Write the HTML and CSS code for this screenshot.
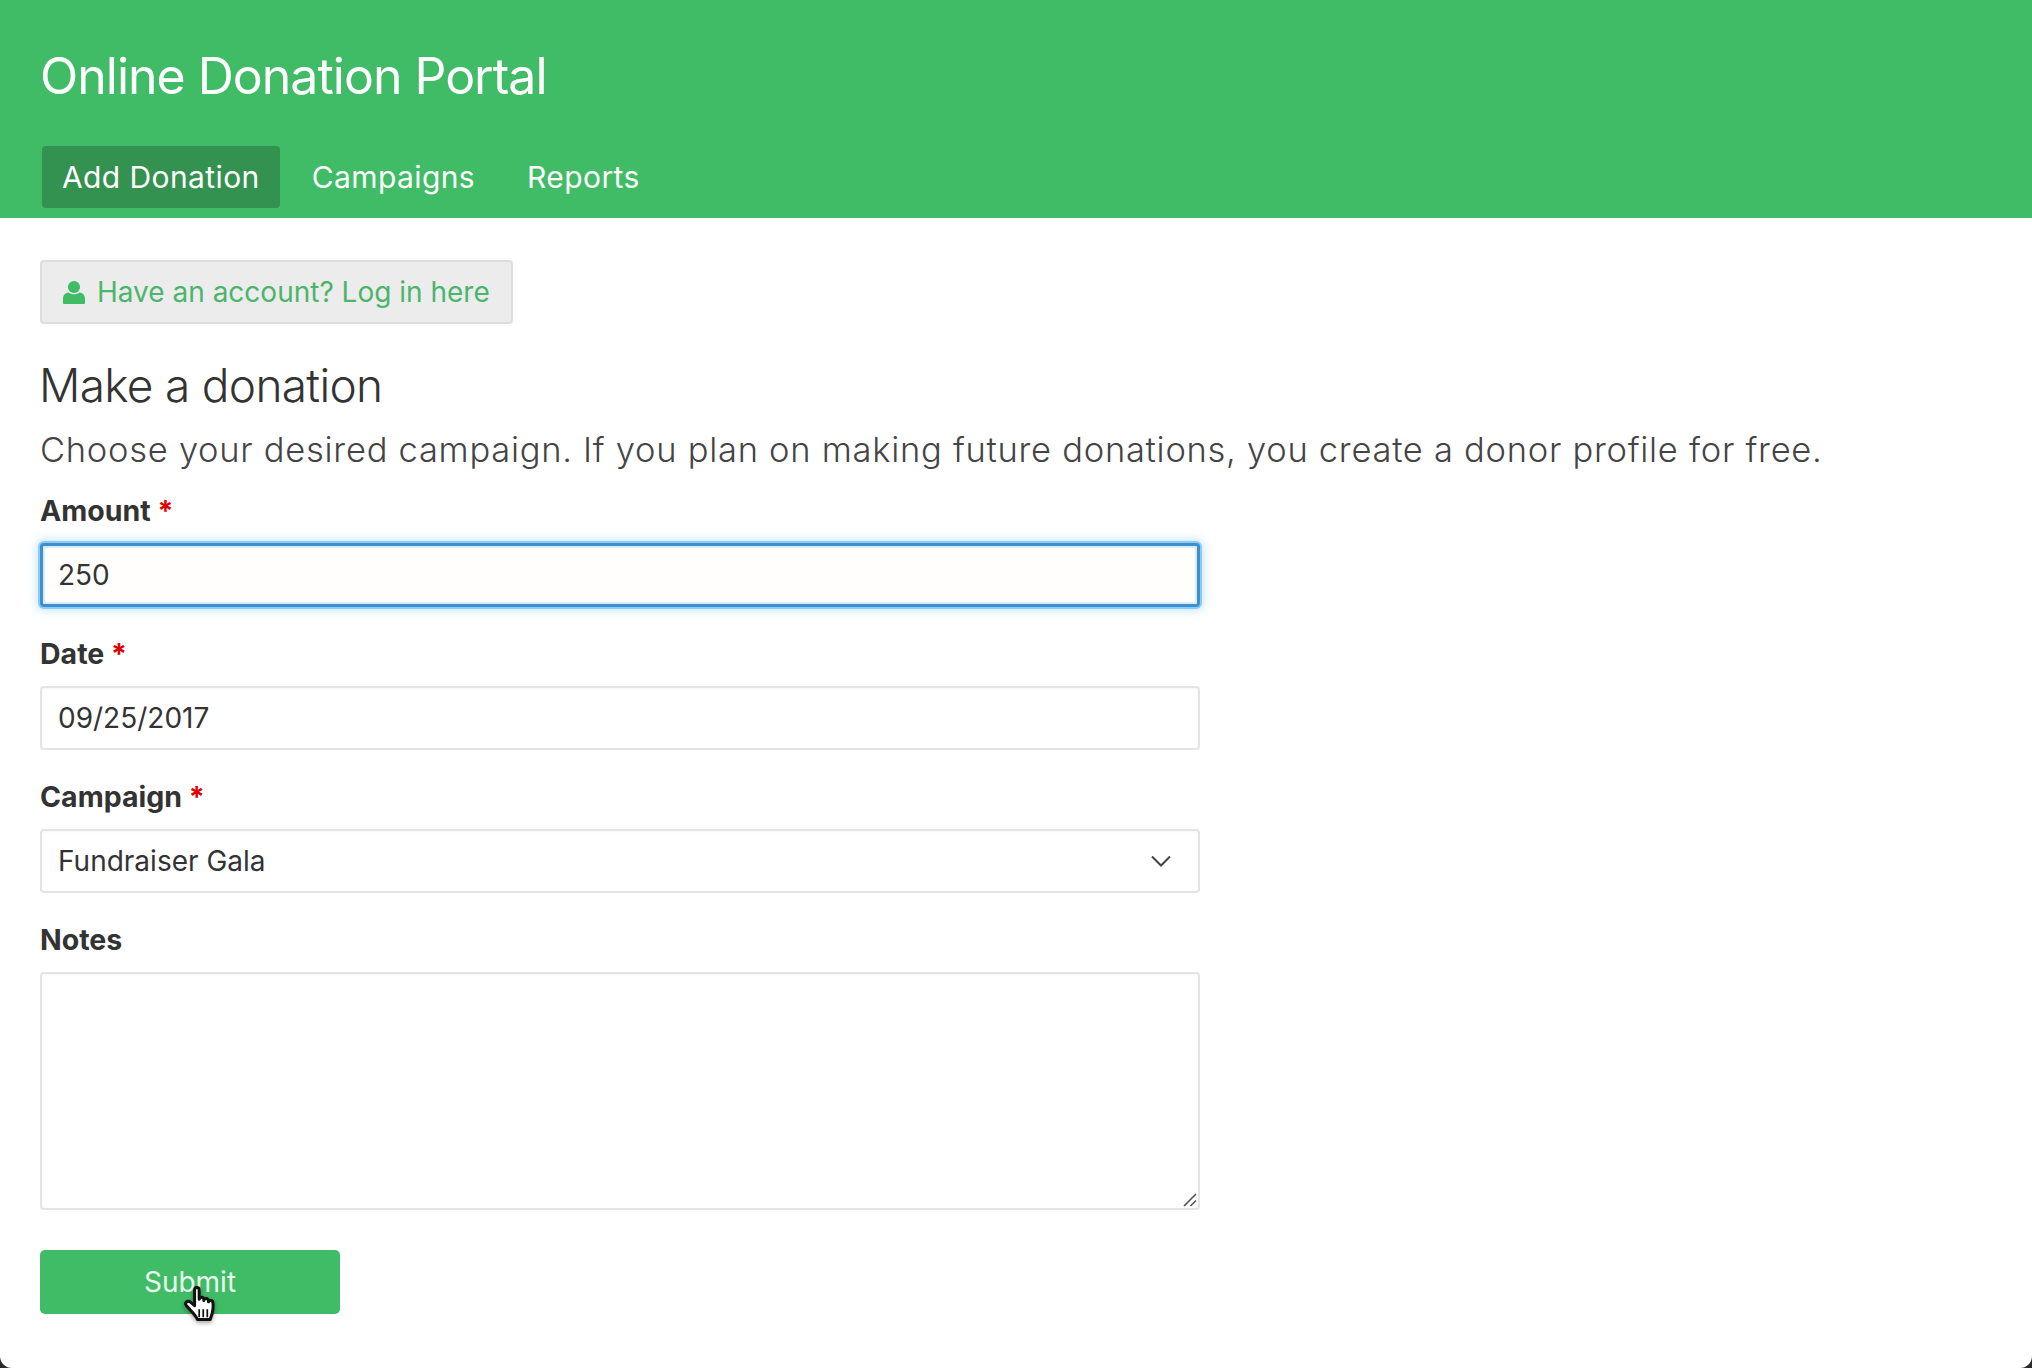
FILE: index.html
```html
<!DOCTYPE html>
<html lang="en">
<head>
  <meta charset="UTF-8" />
  <meta name="viewport" content="width=device-width, initial-scale=1.0" />
  <title>Online Donation Portal</title>
  <link rel="stylesheet" href="styles.css">
</head>
<body>
  <div class="page">
    <header class="site-header">
      <h1>Online Donation Portal</h1>
      <nav class="main-nav">
        <a href="#" class="active">Add Donation</a>
        <a href="#">Campaigns</a>
        <a href="#">Reports</a>
      </nav>
    </header>

    <main class="content">
      <a href="#" class="login-btn">
        <svg class="user-icon" viewBox="0 0 24 26" aria-hidden="true">
          <circle cx="12" cy="7" r="6.6" />
          <path d="M1 25.500c-.6 0-1-.4-1-1v-5c0-3.600 2.600-6.200 6-6.500 1.600 1.300 3.600 2 6 2s4.400-.7 6-2c3.400.3 6 2.900 6 6.500v5c0 .6-.4 1-1 1z" />
        </svg>
        Have an account? Log in here
      </a>

      <h2>Make a donation</h2>
      <p class="lead">Choose your desired campaign. If you plan on making future donations, you create a donor profile for free.</p>

      <form class="donation-form">
        <div class="field">
          <label for="amount">Amount <span class="req">*</span></label>
          <input id="amount" class="control focused" type="text" value="250">
        </div>
        <div class="field">
          <label for="date">Date <span class="req">*</span></label>
          <input id="date" class="control" type="text" value="09/25/2017">
        </div>
        <div class="field">
          <label for="campaign">Campaign <span class="req">*</span></label>
          <div class="select-wrap">
            <select id="campaign" class="control">
              <option>Fundraiser Gala</option>
            </select>
            <svg class="chevron" viewBox="0 0 20 12" aria-hidden="true">
              <path d="M1 1.500l9 9 9-9" />
            </svg>
          </div>
        </div>
        <div class="field field-notes">
          <label for="notes">Notes</label>
          <div class="notes-wrap">
            <textarea id="notes" class="control"></textarea>
            <svg class="grip" viewBox="0 0 14 14" aria-hidden="true">
              <path d="M1 13L13 1M7.500 13L13 7.500" />
            </svg>
          </div>
        </div>
        <div class="submit-wrap">
          <button type="button" class="submit-btn">Submit</button>
          <svg class="hand-cursor" viewBox="0 0 30 32" aria-hidden="true">
            <path class="hand" d="M9 3.500c0-3 4-3 4 0v8c.3-2.400 3.700-2.400 4 0v1c.3-2.200 3.700-2.200 4 .2v1c.4-1.800 3.700-1.700 3.900.6.300 3 .1 6.500-.6 9.200-.5 2-1.200 3.200-1.800 5.500H11.500c-1-2.500-3-4.500-5-7L2 17c-2-2.500 1-5 3.500-3L9 17z" />
            <path class="hand-lines" d="M13 20v7M16.500 20v7M20 20v7" />
          </svg>
        </div>
      </form>
    </main>
  </div>
</body>
</html>
```

FILE: styles.css
```css
* {
  box-sizing: border-box;
}

html,
body {
  height: 100%;
}

body {
  margin: 0;
  background: #2b2b2b;
  color: #333;
  font-family: Inter, "Liberation Sans", sans-serif;
}

.page {
  height: 100%;
  overflow: hidden;
  background: #fff;
  border-radius: 0 0 12px 12px;
}

/* Header */
.site-header {
  height: 218px;
  padding: 50px 40px 0;
  background: #40bb66;
  color: #fff;
}

.site-header h1 {
  margin: 0;
  font-size: 50px;
  line-height: 52px;
  font-weight: 400;
  letter-spacing: -1px;
}

.main-nav {
  display: flex;
  gap: 12px;
  margin-top: 44px;
  margin-left: 2px;
}

.main-nav a {
  padding: 0 20px;
  height: 62px;
  line-height: 62px;
  color: #fff;
  font-size: 30px;
  letter-spacing: 0.4px;
  text-decoration: none;
}

.main-nav a.active {
  background: #33924f;
  border-radius: 4px;
}

/* Content */
.content {
  padding: 42px 40px 0;
}

.login-btn {
  display: inline-flex;
  align-items: center;
  gap: 12px;
  height: 64px;
  padding: 0 21px;
  background: #ececec;
  border: 2px solid #dedede;
  border-radius: 4px;
  color: #4cb56c;
  font-size: 28px;
  text-decoration: none;
}

.user-icon {
  width: 22px;
  height: 25px;
  fill: #40bb66;
}

h2 {
  margin: 32px 0 0 -1px;
  font-size: 46px;
  line-height: 58px;
  font-weight: 300;
  letter-spacing: -0.7px;
}

.lead {
  margin: 11px 0 0;
  font-size: 34.500px;
  line-height: 50px;
  font-weight: 300;
  letter-spacing: 0.72px;
  color: #444;
}

/* Form */
.donation-form {
  width: 1160px;
  margin-top: 18px;
}

.field {
  margin-bottom: 29px;
}

.field-notes {
  margin-bottom: 40px;
}

.field label {
  display: block;
  height: 36px;
  line-height: 36px;
  margin-bottom: 14px;
  font-size: 28.500px;
  font-weight: 700;
}

.req {
  color: #e00000;
}

.control {
  display: block;
  width: 100%;
  height: 64px;
  padding: 0 16px;
  background: #fff;
  border: 2px solid #e4e4e4;
  border-radius: 4px;
  box-shadow: inset 0 1px 2px rgba(0, 0, 0, 0.04);
  color: #333;
  font-family: inherit;
  font-size: 28px;
  outline: none;
  appearance: none;
}

.control.focused {
  padding: 0 15px;
  background: #fffefc;
  border: 3px solid #3f8fd0;
  box-shadow: 0 0 0 2px #8ccbf5, 0 0 8px 4px rgba(140, 203, 245, 0.45), inset 0 0 0 2px #d5ecfb;
}

.select-wrap,
.notes-wrap,
.submit-wrap {
  position: relative;
}

.chevron {
  position: absolute;
  top: 26px;
  right: 29px;
  width: 20px;
  height: 12px;
  fill: none;
  stroke: #444;
  stroke-width: 2;
}

textarea.control {
  height: 238px;
  padding-top: 14px;
  resize: none;
}

.grip {
  position: absolute;
  right: 3px;
  bottom: 3px;
  width: 14px;
  height: 14px;
  fill: none;
  stroke: #555;
  stroke-width: 1.600;
}

.submit-btn {
  display: block;
  width: 300px;
  height: 64px;
  background: #40bb66;
  border: 0;
  border-radius: 5px;
  color: #eafbef;
  font-family: inherit;
  font-size: 28px;
}

.hand-cursor {
  position: absolute;
  left: 144px;
  top: 36px;
  width: 35px;
  height: 37px;
  filter: drop-shadow(0 2px 2px rgba(0, 0, 0, 0.35));
}

.hand {
  fill: #fff;
  stroke: #111;
  stroke-width: 2.600;
  stroke-linejoin: round;
}

.hand-lines {
  fill: none;
  stroke: #111;
  stroke-width: 1.500;
}
```
